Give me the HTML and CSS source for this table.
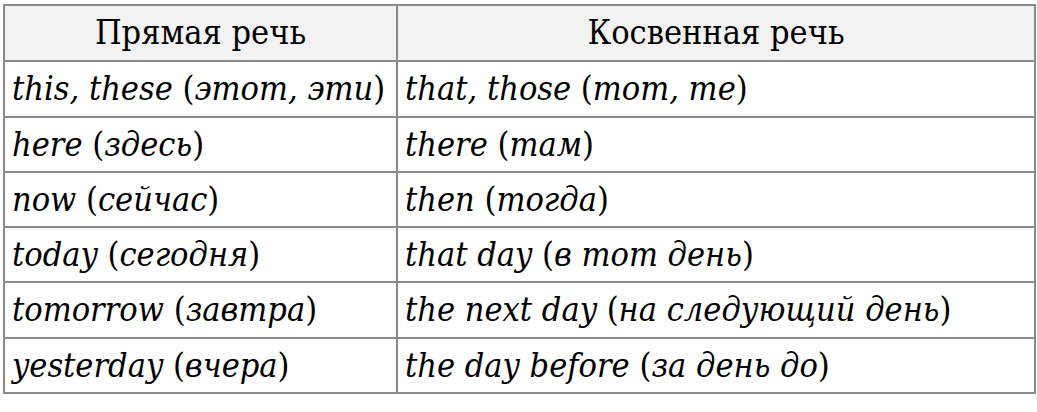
FILE: index.html
```html
<!DOCTYPE html>
<html lang="ru"><head><meta charset="utf-8"><link rel="stylesheet" href="styles.css"></head>
<body>
<div class="table">
  <div class="cell head"><span>Прямая речь</span></div>
  <div class="cell head"><span>Косвенная речь</span></div>
  <div class="cell"><span><i>this, these</i> (<i>этот, эти</i>)</span></div>
  <div class="cell"><span><i>that, those</i> (<i>mom, me</i>)</span></div>
  <div class="cell"><span><i>here</i> (<i>здесь</i>)</span></div>
  <div class="cell"><span><i>there</i> (<i>там</i>)</span></div>
  <div class="cell"><span><i>now</i> (<i>сейчас</i>)</span></div>
  <div class="cell"><span><i>then</i> (<i>тогда</i>)</span></div>
  <div class="cell"><span><i>today</i> (<i>сегодня</i>)</span></div>
  <div class="cell"><span><i>that day</i> (<i>в тот день</i>)</span></div>
  <div class="cell"><span><i>tomorrow</i> (<i>завтра</i>)</span></div>
  <div class="cell"><span><i>the next day</i> (<i>на следующий день</i>)</span></div>
  <div class="cell"><span><i>yesterday</i> (<i>вчера</i>)</span></div>
  <div class="cell"><span><i>the day before</i> (<i>за день до</i>)</span></div>
</div>
</body></html>
```
FILE: styles.css
```css
html,body{margin:0;padding:0;background:#fff}
body{padding:4px 0 0 3px;font-family:"DejaVu Serif Condensed","DejaVu Serif",serif;color:#000}
.table{
  display:grid;
  width:max-content;
  grid-template-columns:391px 636px;
  grid-template-rows:54px 54px 53px 53px 53px 54px 53px;
  gap:2px;
  padding:2px;
  background:#8a8a8a;
}
.cell{
  background:#fff;
  font-size:34px;
  display:flex;
  align-items:center;
  padding:0 0 2px 7px;
  white-space:nowrap;
}
.cell i{font-style:italic}
.head{
  background:#f2f2f2;
  justify-content:center;
  padding-left:0;
}
```
